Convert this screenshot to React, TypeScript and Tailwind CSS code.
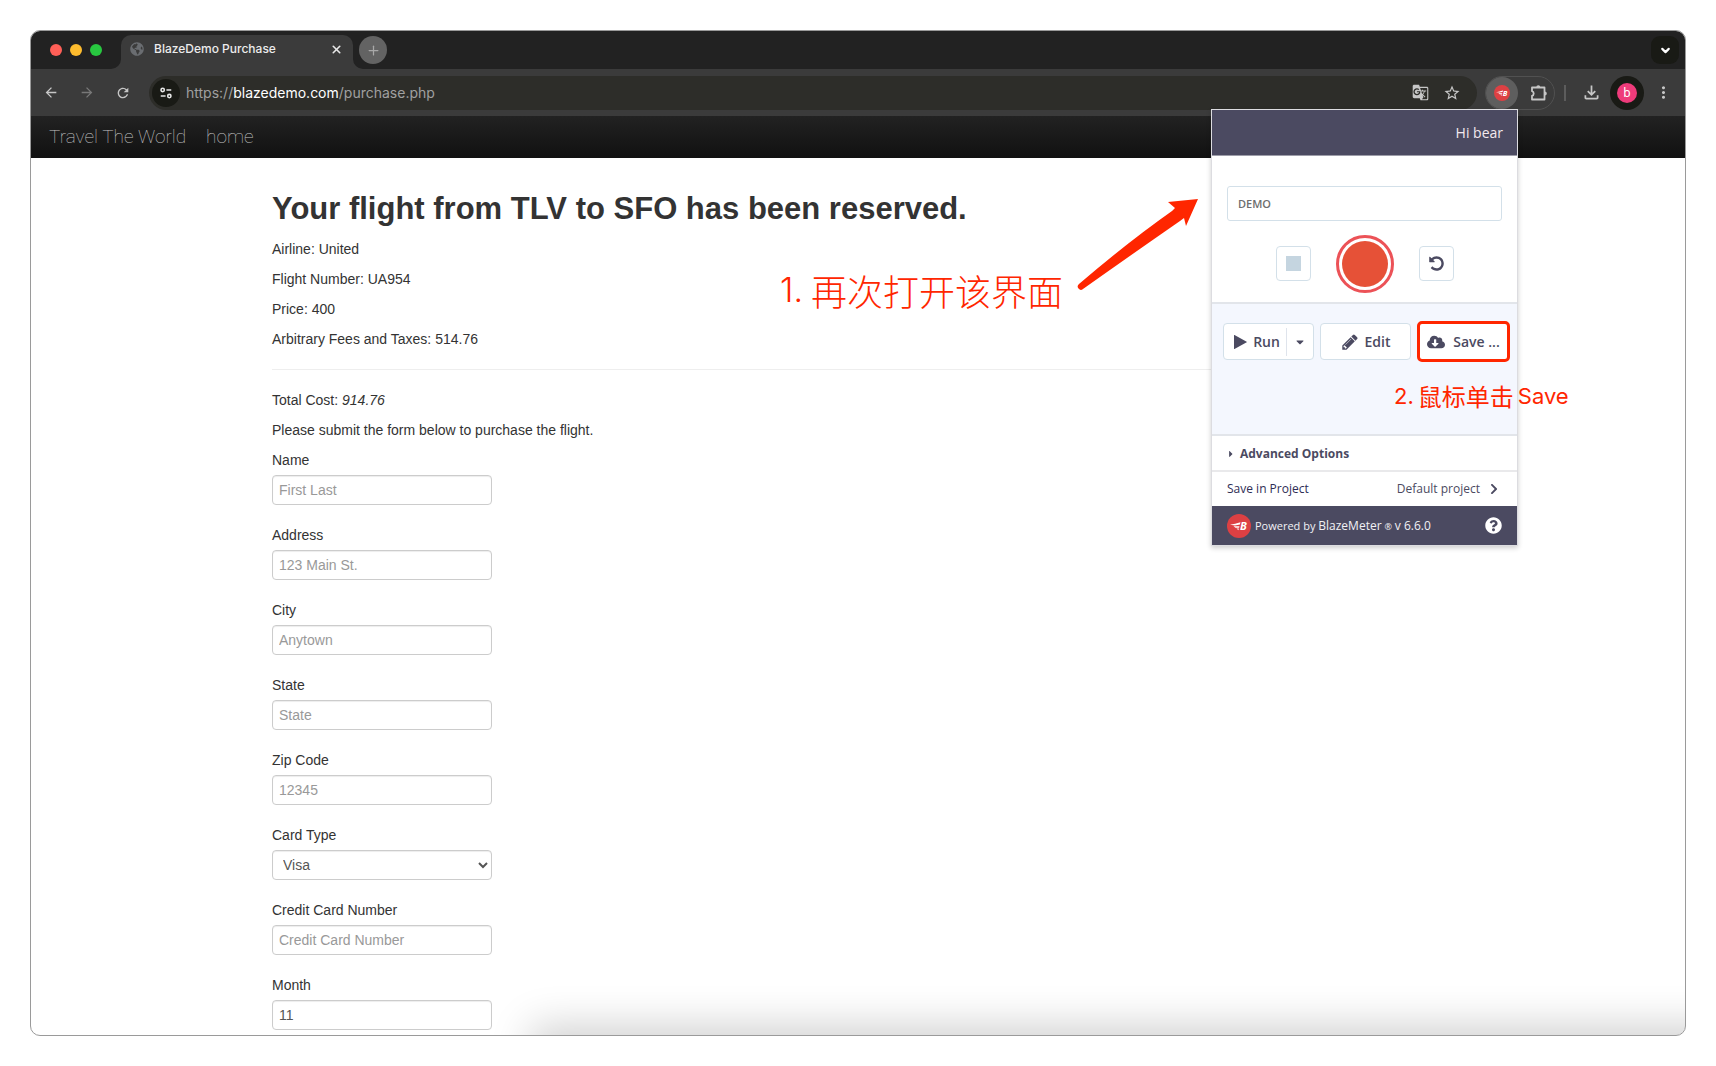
import { useState } from "react"
import type { ReactNode } from "react"
import { ChevronDown, Plus, X } from "lucide-react"
import { FaCaretDown, FaCaretRight, FaChevronRight, FaCloudDownloadAlt, FaGlobeAmericas, FaQuestionCircle } from "react-icons/fa"
import {
  MdArrowBack,
  MdArrowForward,
  MdGTranslate,
  MdMoreVert,
  MdOutlineFileDownload,
  MdRefresh,
  MdStarBorder,
} from "react-icons/md"

const fields = [
  { id: "name", label: "Name", placeholder: "First Last" },
  { id: "address", label: "Address", placeholder: "123 Main St." },
  { id: "city", label: "City", placeholder: "Anytown" },
  { id: "state", label: "State", placeholder: "State" },
  { id: "zip", label: "Zip Code", placeholder: "12345" },
  { id: "cardType", label: "Card Type", options: ["Visa", "American Express", "Diner's Club"] },
  { id: "card", label: "Credit Card Number", placeholder: "Credit Card Number" },
  { id: "month", label: "Month", value: "11" },
]

const control =
  "h-[30px] w-[220px] rounded-[4px] border border-[#ccc] bg-white px-1.5 text-[14px] leading-5 text-[#555] shadow-[inset_0_1px_1px_rgba(0,0,0,0.075)] placeholder:text-[#999]"

function BlazeLogo({ className }: { className: string }) {
  return (
    <svg viewBox="0 0 24 24" className={className} aria-hidden="true">
      <circle cx="12" cy="12" r="12" fill="#dd4043" />
      <path d="M3 10.800Q8 9.800 13.500 8.200l-.6 2.200L8 11.400zM6.500 12.300h6l-.4 1.500H8.500zM9.500 14.600h2.400l-.5 1.600z" fill="#fff" />
      <text x="13" y="16" fontSize="11" fontWeight="700" fontStyle="italic" fontFamily="Open Sans, sans-serif" fill="#fff">
        B
      </text>
    </svg>
  )
}

function PlayIcon() {
  return (
    <svg viewBox="0 0 13 14" className="h-3.5 w-[13px]" fill="currentColor" aria-hidden="true">
      <path d="M0 .3v13.400q0 .5.5.2L12.700 7.300q.4-.3 0-.6L.5.100Q0-.2 0 .3" />
    </svg>
  )
}

function UndoIcon() {
  return (
    <svg viewBox="0 0 1792 1792" className="size-[17px]" fill="currentColor" aria-hidden="true">
      <path d="M1664 896q0 156-61 298t-164 245-245 164-298 61q-172 0-327-72.500t-264-204.500q-7-10-6.500-22.500t8.500-20.500l137-138q10-9 25-9 16 2 23 12 73 95 179 147t225 52q104 0 198.500-40.500t163.500-109.500 109.500-163.500 40.500-198.500-40.500-198.500-109.500-163.500-163.500-109.500-198.500-40.500q-98 0-188 35.500t-160 101.500l137 138q31 30 14 69-17 40-59 40h-448q-26 0-45-19t-19-45v-448q0-42 40-59 39-17 69 14l130 129q107-101 244.500-156.500t284.500-55.500q156 0 298 61t245 164 164 245 61 298z" />
    </svg>
  )
}

function PencilIcon() {
  return (
    <svg viewBox="0 0 1792 1792" className="size-[18px]" fill="currentColor" aria-hidden="true">
      <path d="M491 1536l91-91-235-235-91 91v107h128v128h107zm523-928q0-22-22-22-10 0-17 7l-542 542q-7 7-7 17 0 22 22 22 10 0 17-7l542-542q7-7 7-17zm-54-192l416 416-832 832h-416v-416zm683 96q0 53-37 90l-166 166-416-416 166-165q36-38 90-38 53 0 91 38l235 234q37 39 37 91z" />
    </svg>
  )
}

function SiteSettingsIcon() {
  return (
    <svg viewBox="0 0 16 16" className="size-3.5" fill="none" stroke="#e8e8e8" strokeWidth="1.800" aria-hidden="true">
      <circle cx="4.200" cy="4.500" r="1.900" />
      <path d="M8.500 4.500H14M2 11.500h5.500" />
      <circle cx="11.800" cy="11.500" r="1.900" />
    </svg>
  )
}

function ExtensionsIcon() {
  return (
    <svg viewBox="0 0 18 18" className="size-[18px]" aria-hidden="true">
      <path
        d="M2 3.500h12.500v12H2v-3.700a2.400 2.400 0 0 0 0-4.600z"
        fill="none"
        stroke="currentColor"
        strokeWidth="1.800"
        strokeLinejoin="round"
      />
      <path d="M6.300 3.300a2 2 0 0 1 4 0zM14.800 7.500a2 2 0 0 1 0 4z" fill="currentColor" />
    </svg>
  )
}

function BarButton({ label, className = "", children }: { label: string; className?: string; children: ReactNode }) {
  return (
    <button type="button" aria-label={label} className={`flex shrink-0 items-center justify-center ${className}`}>
      {children}
    </button>
  )
}

function TabStrip() {
  return (
    <div className="flex h-[38px] items-center bg-[#222] pr-1.5 font-['Inter',sans-serif]">
      <div className="flex gap-2 pl-[19px]">
        <span className="size-3 rounded-full bg-[#ff5f57]" />
        <span className="size-3 rounded-full bg-[#febc2e]" />
        <span className="size-3 rounded-full bg-[#28c840]" />
      </div>
      <div className="relative ml-[19px] flex h-[34px] w-[232px] self-end rounded-t-[10px] bg-[#3b3b3b] pr-2.5 pl-[9px]">
        <svg viewBox="0 0 10 10" className="absolute bottom-0 -left-2.5 size-2.5" aria-hidden="true">
          <path d="M10 0v10H0A10 10 0 0 0 10 0" fill="#3b3b3b" />
        </svg>
        <svg viewBox="0 0 10 10" className="absolute -right-2.5 bottom-0 size-2.5" aria-hidden="true">
          <path d="M0 0v10h10A10 10 0 0 1 0 0" fill="#3b3b3b" />
        </svg>
        <div className="flex h-7 flex-1 items-center">
          <FaGlobeAmericas className="size-3.5 text-[#6a6d71]" />
          <span className="ml-2.5 flex-1 text-[12px] font-medium text-[#ececec]">BlazeDemo Purchase</span>
          <BarButton label="Close tab" className="text-[#e8e8e8]">
            <X size={13} strokeWidth={3} />
          </BarButton>
        </div>
      </div>
      <BarButton label="New tab" className="ml-1.5 size-7 rounded-full bg-[#636363] text-[#a8a8a8]">
        <Plus size={15} />
      </BarButton>
      <BarButton label="Search tabs" className="ml-auto size-7 rounded-[9px] bg-[#191a15] text-white">
        <ChevronDown size={13} strokeWidth={4} />
      </BarButton>
    </div>
  )
}

function Toolbar() {
  return (
    <div className="flex h-[47px] items-center bg-[#3b3b3b] px-3 font-['Inter',sans-serif] text-[#c6c6c6]">
      <BarButton label="Back" className="w-4">
        <MdArrowBack size={17} />
      </BarButton>
      <BarButton label="Forward" className="ml-5 w-4 text-[#787878]">
        <MdArrowForward size={17} />
      </BarButton>
      <BarButton label="Reload" className="ml-5 w-4">
        <MdRefresh size={18} />
      </BarButton>
      <div className="ml-[18px] flex h-[34px] flex-1 items-center rounded-full bg-[#2d2d29] pr-4 pl-[3px]">
        <BarButton label="Site information" className="size-7 rounded-full bg-[#191a15]">
          <SiteSettingsIcon />
        </BarButton>
        <div className="ml-1.5 flex-1 text-[14px] text-[#a0a0a0]">
          https://<span className="text-white">blazedemo.com</span>/purchase.php
        </div>
        <BarButton label="Translate" className="mr-3.5">
          <MdGTranslate size={17} />
        </BarButton>
        <BarButton label="Bookmark">
          <MdStarBorder size={18} />
        </BarButton>
      </div>
      <div className="ml-2 flex h-[34px] w-[70px] items-center rounded-full border border-[#515151]">
        <BarButton label="BlazeMeter" className="size-8 rounded-full bg-[#5e5e5e]">
          <BlazeLogo className="size-4" />
        </BarButton>
        <BarButton label="Extensions" className="ml-3">
          <ExtensionsIcon />
        </BarButton>
      </div>
      <span className="mx-[9px] h-4 w-0.5 bg-[#5c5c5c]" />
      <BarButton label="Downloads" className="ml-1.5">
        <MdOutlineFileDownload size={21} />
      </BarButton>
      <BarButton label="Profile" className="ml-2 size-[34px] rounded-full bg-[#191a15]">
        <span className="flex size-5 items-center justify-center rounded-full bg-[#ee3b7a] font-['Noto_Sans',sans-serif] text-[12px] leading-5 text-white">b</span>
      </BarButton>
      <BarButton label="Menu" className="ml-2.5">
        <MdMoreVert size={19} />
      </BarButton>
    </div>
  )
}

function PurchaseForm() {
  return (
    <form className="space-y-5">
      {fields.map((field) => (
        <div key={field.id}>
          <label htmlFor={field.id} className="mb-[5px] block w-fit">
            {field.label}
          </label>
          {field.options ? (
            <select id={field.id} className={`block ${control}`}>
              {field.options.map((option) => (
                <option key={option}>{option}</option>
              ))}
            </select>
          ) : (
            <input id={field.id} type="text" placeholder={field.placeholder} defaultValue={field.value} className={`block ${control}`} />
          )}
        </div>
      ))}
    </form>
  )
}

function RecorderPopup() {
  const [testName, setTestName] = useState("DEMO")
  const box = "flex items-center justify-center rounded-[4px] border border-[#d3e0e9] bg-white"

  return (
    <section className="absolute top-[78px] right-[167px] w-[307px] border border-[#dcdce0] bg-white font-['Open_Sans',sans-serif] text-[#4b4a61] shadow-[0_2px_5px_rgba(0,0,0,0.2)]">
      <header className="flex h-[46px] items-center justify-end border-b border-[#9d9da9] bg-[#4b4a61] px-3.5 text-[14px] font-medium text-[#f3e9ee]">
        Hi bear
      </header>
      <div className="px-[15px] pt-[30px]">
        <input
          aria-label="Test name"
          value={testName}
          onChange={(e) => setTestName(e.target.value)}
          className="block h-[35px] w-full rounded-[3px] border border-[#d3e0e9] px-2.5 text-[11px] font-semibold text-[#6e6e6e]"
        />
      </div>
      <div className="flex h-[81px] items-center justify-center gap-[25px] pt-1">
        <button type="button" aria-label="Stop" className={`size-[35px] ${box}`}>
          <span className="size-[15px] bg-[#c5d5e0]" />
        </button>
        <button type="button" aria-label="Record" className="flex size-[58px] items-center justify-center rounded-full border-[3px] border-[#ec5257]">
          <span className="size-[46px] rounded-full bg-[#e65137]" />
        </button>
        <button type="button" aria-label="Reset" className={`size-[35px] ${box}`}>
          <UndoIcon />
        </button>
      </div>
      <div className="flex h-[134px] items-start gap-1.5 border-y-2 border-[#e2e5ea] bg-[#f4f7fe] px-[5px] pt-[19px] text-[14px] font-semibold">
        <div className={`ml-1.5 h-[37px] w-[91px] ${box}`}>
          <button type="button" className="flex flex-1 items-center justify-center gap-1.5 pl-1">
            <PlayIcon />
            Run
          </button>
          <button type="button" aria-label="More run options" className="flex h-[28px] w-[27px] items-center justify-center border-l border-[#dfe4ec]">
            <FaCaretDown size={12} />
          </button>
        </div>
        <button type="button" className={`h-[37px] w-[91px] gap-1.5 ${box}`}>
          <PencilIcon />
          Edit
        </button>
        <button
          type="button"
          className="-mt-0.5 flex h-[41px] w-[93px] items-center justify-center gap-2 rounded-[5px] border-[3px] border-[#ff2600] bg-white"
        >
          <FaCloudDownloadAlt size={18} />
          Save ...
        </button>
      </div>
      <button type="button" className="flex h-9 w-full items-center gap-1 border-b-2 border-[#e9e9eb] px-3.5 pt-0.5 text-[12px] font-bold">
        <FaCaretRight size={10} />
        Advanced Options
      </button>
      <div className="flex h-[34px] items-center justify-between px-[15px] text-[12px] font-medium">
        <span className="text-[#2e2d55]">Save in Project</span>
        <button type="button" className="flex items-center gap-2 pr-0.5">
          Default project
          <FaChevronRight size={12} />
        </button>
      </div>
      <footer className="flex h-[39px] items-center bg-[#4b4a61] px-[15px] text-[#f1f1f5]">
        <BlazeLogo className="size-6" />
        <span className="ml-1 flex-1 text-[11px] font-medium">
          Powered by <span className="text-[12px]">BlazeMeter</span> <span className="text-[9px]">®</span> <span className="text-[12px]">v 6.6.0</span>
        </span>
        <button type="button" aria-label="Help">
          <FaQuestionCircle size={17} className="text-white" />
        </button>
      </footer>
      <p className="absolute top-[268px] left-[182px] flex items-center whitespace-nowrap font-['Noto_Sans_CJK_SC',sans-serif] text-[24px] leading-9 text-[#ff2600]">
        <span className="mr-1 font-['Inter',sans-serif] text-[22px]">2.</span>鼠标单击
        <span className="ml-1 font-['Inter',sans-serif] text-[22px]">Save</span>
      </p>
    </section>
  )
}

export default function App() {
  return (
    <div className="flex min-h-screen flex-col bg-white p-[30px]">
      <div className="relative flex flex-1 flex-col overflow-hidden rounded-[10px] border border-[#9a9a9a] bg-white font-['Liberation_Sans',sans-serif]">
        <TabStrip />
        <Toolbar />
        <nav className="flex h-[42px] items-center gap-5 bg-linear-to-b from-[#222] to-[#111] px-[18px] font-['Roboto',sans-serif] text-[19px] font-thin text-[#c4c4c4]">
          <a href="#top">Travel The World</a>
          <a href="#home">home</a>
        </nav>
        <main className="relative flex-1 overflow-hidden pt-[31px] pb-1 text-[14px] leading-5 text-[#333]">
          <div className="mx-auto w-[1172px]">
            <h2 className="mb-2.5 text-[31px] leading-10 font-bold">Your flight from TLV to SFO has been reserved.</h2>
            <div className="space-y-2.5">
              <p>Airline: United</p>
              <p>Flight Number: UA954</p>
              <p>Price: 400</p>
              <p>Arbitrary Fees and Taxes: 514.76</p>
            </div>
            <hr className="my-5 border-[#eee]" />
            <div className="mb-2.5 space-y-2.5">
              <p>
                Total Cost: <em>914.76</em>
              </p>
              <p>Please submit the form below to purchase the flight.</p>
            </div>
            <PurchaseForm />
          </div>
          <div className="absolute top-full right-[-40px] left-[510px] h-20 shadow-[0_0_40px_10px_rgba(0,0,0,0.18)]" />
        </main>
        <p className="absolute top-[235px] right-[622px] flex items-center whitespace-nowrap font-['Noto_Sans_CJK_SC',sans-serif] text-[36px] leading-[48px] font-light text-[#ff2600]">
          <span className="mr-2 font-['Inter',sans-serif] text-[34px]">1.</span>再次打开该界面
        </p>
        <svg viewBox="0 0 122 92" className="absolute top-[167px] right-[486px] h-[92px] w-[122px]" aria-hidden="true">
          <path d="M121 1 91 4l7 6-3 3Q51 44 2 86a2.800 2.800 0 0 0 4 5Q54 57 103 23l4-3 2 8z" fill="#ff2600" />
        </svg>
        <RecorderPopup />
      </div>
    </div>
  )
}
